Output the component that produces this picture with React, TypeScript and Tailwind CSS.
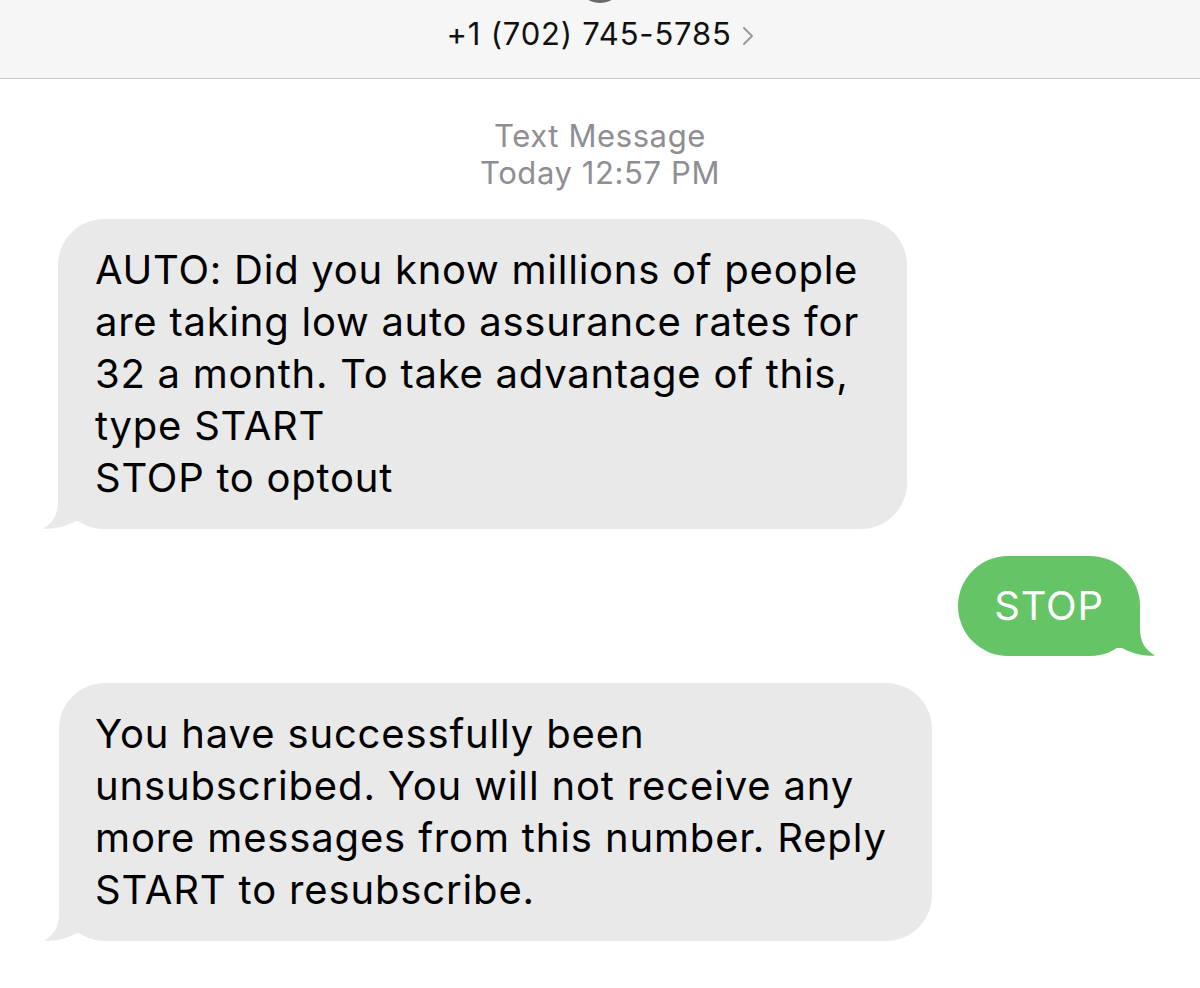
const TailLeft = () => (
  <svg
    className="absolute bottom-0 left-[-16px]"
    width="60"
    height="50"
    viewBox="0 0 60 50"
  >
    <path
      d="M16 0 L16 22 C16 36 11 44 1 49.5 C12 50.5 24 47.5 34 42 L60 42 L60 0 Z"
      fill="#e9e9e9"
    />
  </svg>
);

const TailRight = () => (
  <svg
    className="absolute bottom-0 right-[-16px]"
    width="60"
    height="50"
    viewBox="0 0 60 50"
  >
    <path
      d="M44 0 L44 22 C44 36 49 44 59 49.5 C48 50.5 36 47.5 26 42 L0 42 L0 0 Z"
      fill="#65c466"
    />
  </svg>
);

const App = () => {
  return (
    <div
      className="w-[1200px] h-[988px] bg-white overflow-hidden relative"
      style={{ fontFamily: 'Inter, "Noto Sans", sans-serif' }}
    >
      {/* Header */}
      <div className="relative h-[79px] bg-[#f6f6f6] border-b border-[#c6c6c8] flex items-center justify-center overflow-hidden">
        <div className="absolute left-[577px] top-[-58px] w-[46px] h-[61px] rounded-full bg-[#6b6b6b]" />
        <div className="flex items-center gap-[10px] mb-[10px]">
          <span className="text-[31px] tracking-[0.8px] text-[#111]">+1 (702) 745-5785</span>
          <svg width="12" height="20" viewBox="0 0 12 20" className="mt-[3px]">
            <polyline
              points="2,2 10,10 2,18"
              fill="none"
              stroke="#9a9a9e"
              strokeWidth="2"
              strokeLinecap="round"
              strokeLinejoin="round"
            />
          </svg>
        </div>
      </div>

      {/* Timestamp */}
      <div className="pt-[38px] flex flex-col items-center text-[31px] tracking-[0.6px] leading-[37px] text-[#8e8e93]">
        <span>Text Message</span>
        <span>Today 12:57 PM</span>
      </div>

      {/* Incoming */}
      <div className="pl-[58px] mt-[28px]">
        <div className="relative w-[849px] bg-[#e9e9e9] rounded-[46px] px-[37px] py-[25px] text-[40px] tracking-[0.75px] leading-[52px] text-black whitespace-nowrap">
          <TailLeft />
          <div className="relative">
            AUTO: Did you know millions of people
            <br />
            are taking low auto assurance rates for
            <br />
            32 a month. To take advantage of this,
            <br />
            type START
            <br />
            STOP to optout
          </div>
        </div>
      </div>

      {/* Outgoing */}
      <div className="flex justify-end pr-[60px] mt-[27px]">
        <div className="relative w-[182px] h-[100px] bg-[#65c466] rounded-[50px] flex items-center justify-center text-[40px] tracking-[0.75px] text-white">
          <TailRight />
          <span className="relative">STOP</span>
        </div>
      </div>

      {/* Incoming */}
      <div className="pl-[59px] mt-[27px]">
        <div className="relative w-[873px] bg-[#e9e9e9] rounded-[46px] px-[36px] py-[25px] text-[40px] tracking-[0.85px] leading-[52px] text-black whitespace-nowrap">
          <TailLeft />
          <div className="relative">
            You have successfully been
            <br />
            unsubscribed. You will not receive any
            <br />
            more messages from this number. Reply
            <br />
            START to resubscribe.
          </div>
        </div>
      </div>
    </div>
  );
};

export default App;
